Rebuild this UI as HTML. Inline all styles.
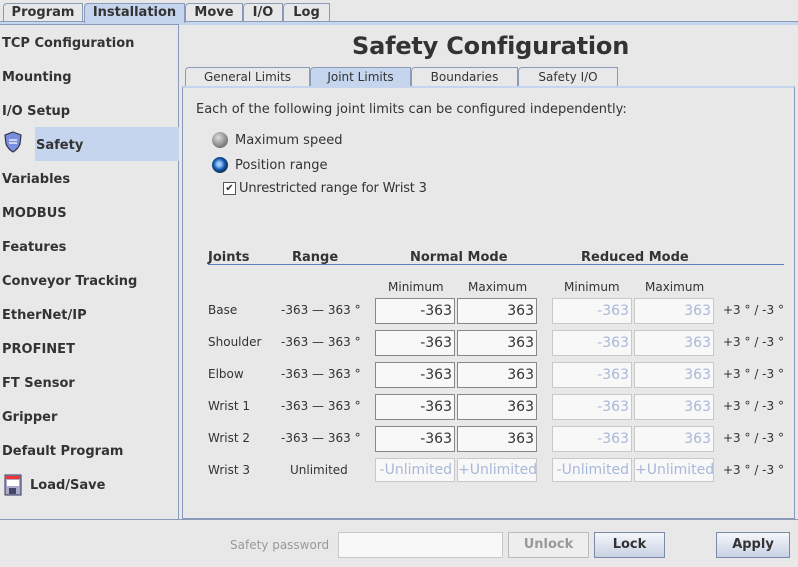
<!DOCTYPE html><html><head><style>
body{margin:0;width:798px;height:567px;background:#e8e8e8;font-family:"DejaVu Sans","Liberation Sans",sans-serif;font-size:13px;color:#333;position:relative;overflow:hidden}
.a{position:absolute;white-space:nowrap}
.tab{position:absolute;top:3px;height:17px;border:1px solid #8a9ab8;border-bottom:none;background:#e8e8e8;font-weight:bold;font-size:13px;text-align:center;line-height:18px;border-radius:4px 0 0 0}
.st{position:absolute;top:67px;height:18px;border:1px solid #8a9ab8;border-bottom:none;background:#e8e8e8;font-size:12px;text-align:center;line-height:19px;border-radius:4px 0 0 0}
.li{position:absolute;left:2px;font-weight:bold;font-size:13px}
.f{position:absolute;width:78px;height:24px;border:1px solid #888;background:#f8f8f8;text-align:right;line-height:25px;font-size:14px;box-sizing:content-box;padding-right:0}
.f span{padding-right:2px}
.d{border-color:#c8c8c8;color:#a8b8d8}
.btn{position:absolute;height:24px;border:1px solid #7a8aa8;background:linear-gradient(#f4f6fa,#c8d2e4);font-weight:bold;text-align:center;line-height:24px;font-size:13px}
</style></head><body>
<div class="a" style="left:0;top:21px;width:798px;height:3px;background:#c5d5ee;border-top:1px solid #8a9ab8"></div>
<div class="tab" style="left:3px;width:78px">Program</div>
<div class="tab" style="left:84px;width:99px;background:#c5d5ee;height:19px">Installation</div>
<div class="tab" style="left:185px;width:56px">Move</div>
<div class="tab" style="left:243px;width:38px">I/O</div>
<div class="tab" style="left:283px;width:45px">Log</div>
<div class="a" style="left:0;top:24px;width:178px;height:494px;border:1px solid #8a9ab8;border-left:none"></div>
<div class="a" style="left:35px;top:127px;width:144px;height:34px;background:#c5d5ee"></div>
<div class="li" style="top:36px">TCP Configuration</div>
<div class="li" style="top:70px">Mounting</div>
<div class="li" style="top:104px">I/O Setup</div>
<svg class="a" style="left:4px;top:131px" width="18" height="22" viewBox="0 0 18 22"><path d="M9 1 L17 4 L16 13 Q14 18 9 21 Q4 18 2 13 L1 4Z" fill="#7a8ee0" stroke="#334" stroke-width="1.2"/><path d="M5 9h8M5 12h8" stroke="#fff" stroke-width="1.3"/></svg>
<div class="li" style="top:138px;left:36px">Safety</div>
<div class="li" style="top:172px">Variables</div>
<div class="li" style="top:206px">MODBUS</div>
<div class="li" style="top:240px">Features</div>
<div class="li" style="top:274px">Conveyor Tracking</div>
<div class="li" style="top:308px">EtherNet/IP</div>
<div class="li" style="top:342px">PROFINET</div>
<div class="li" style="top:376px">FT Sensor</div>
<div class="li" style="top:410px">Gripper</div>
<div class="li" style="top:444px">Default Program</div>
<svg class="a" style="left:4px;top:474px" width="18" height="22"><rect x="1" y="1" width="16" height="20" fill="#aac" stroke="#335"/><rect x="2" y="2" width="14" height="3" fill="#e33"/><rect x="3" y="6" width="12" height="6" fill="#fff"/><rect x="5" y="14" width="7" height="6" fill="#446"/></svg>
<div class="li" style="top:478px;left:30px">Load/Save</div>
<div class="a" style="left:352px;top:32px;font-size:24px;font-weight:bold;color:#333;letter-spacing:-0.2px">Safety Configuration</div>
<div class="st" style="left:185px;width:123px">General Limits</div>
<div class="st" style="left:310px;width:99px;background:#c5d5ee">Joint Limits</div>
<div class="st" style="left:411px;width:105px">Boundaries</div>
<div class="st" style="left:518px;width:98px">Safety I/O</div>
<div class="a" style="left:182px;top:86px;width:611px;height:430px;border:1px solid #8a9ab8;border-top:2px solid #c5d5ee"></div>
<div class="a" style="left:196px;top:102px">Each of the following joint limits can be configured independently:</div>
<div class="a" style="left:212px;top:132px;width:16px;height:16px;border-radius:50%;background:radial-gradient(circle at 40% 35%,#ddd,#777 70%,#555)"></div>
<div class="a" style="left:235px;top:133px">Maximum speed</div>
<div class="a" style="left:212px;top:157px;width:16px;height:16px;border-radius:50%;background:radial-gradient(circle at 45% 45%,#9cf 15%,#15a 45%,#123 80%)"></div>
<div class="a" style="left:235px;top:158px">Position range</div>
<div class="a" style="left:223px;top:182px;width:11px;height:11px;border:1px solid #555;background:#fff;font-size:10px;line-height:11px;text-align:center">✔</div>
<div class="a" style="left:239px;top:181px;letter-spacing:-0.2px">Unrestricted range for Wrist 3</div>
<div class="a" style="left:208px;top:250px;font-weight:bold">Joints</div>
<div class="a" style="left:292px;top:250px;font-weight:bold">Range</div>
<div class="a" style="left:410px;top:250px;font-weight:bold">Normal Mode</div>
<div class="a" style="left:581px;top:250px;font-weight:bold">Reduced Mode</div>
<div class="a" style="left:208px;top:264px;width:576px;height:1px;background:#5a7ec0"></div>
<div class="a" style="left:388px;top:280px;font-size:12px">Minimum</div>
<div class="a" style="left:468px;top:280px;font-size:12px">Maximum</div>
<div class="a" style="left:564px;top:280px;font-size:12px">Minimum</div>
<div class="a" style="left:645px;top:280px;font-size:12px">Maximum</div>
<div id="rows"></div>
<div class="a" style="left:0;top:519px;width:798px;height:1px;background:#8a9ab8"></div>
<div class="a" style="left:230px;top:538px;color:#999;font-size:12px">Safety password</div>
<div class="a" style="left:338px;top:532px;width:163px;height:24px;border:1px solid #c8c8c8;background:#f8f8f8"></div>
<div class="btn" style="left:508px;top:532px;width:79px;background:#eee;border-color:#bbb;color:#999">Unlock</div>
<div class="btn" style="left:594px;top:532px;width:69px">Lock</div>
<div class="btn" style="left:716px;top:532px;width:72px">Apply</div>
<script>
var r=[["Base"],["Shoulder"],["Elbow"],["Wrist 1"],["Wrist 2"]],h="";
function row(y,n,rg,v,d){h+='<div class="a" style="left:208px;top:'+(y+5)+'px;font-size:12px">'+n+'</div><div class="a" style="left:'+(rg=="Unlimited"?290:281)+'px;top:'+(y+5)+'px;font-size:12px">'+rg+'</div>';
var xs=[375,457,552,634];for(var i=0;i<4;i++){h+='<div class="f'+((i>1||d)?' d':'')+'" style="left:'+xs[i]+'px;top:'+(y)+'px;'+(d?'height:22px;line-height:23px;':'')+'"><span>'+v[i]+'</span></div>';}
h+='<div class="a" style="left:723px;top:'+(y+5)+'px;font-size:12px">+3 ° / -3 °</div>';}
for(var i=0;i<5;i++)row(298+32*i,r[i][0],"-363 — 363 °",["-363","363","-363","363"]);
row(458,"Wrist 3","Unlimited",["-Unlimited","+Unlimited","-Unlimited","+Unlimited"],1);
document.getElementById("rows").innerHTML=h;
</script>
</body></html>
